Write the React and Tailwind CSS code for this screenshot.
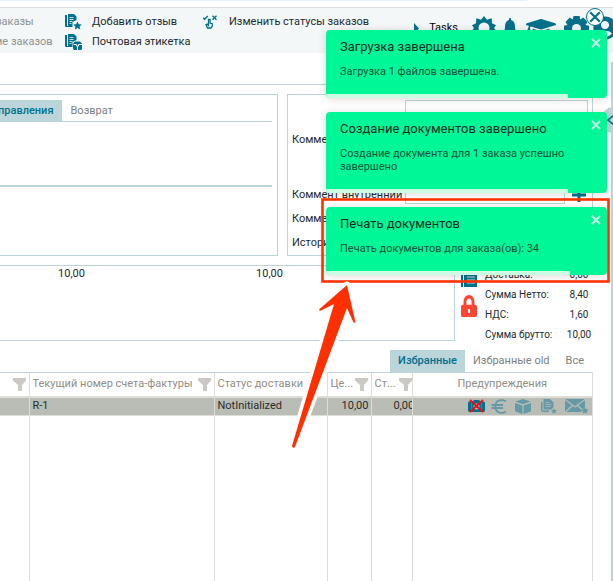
import { FaBell, FaGraduationCap, FaUserCircle, FaLock } from "react-icons/fa";

const toasts = [
  {
    title: "Загрузка завершена",
    text: "Загрузка 1 файлов завершена.",
    progress: 86,
  },
  {
    title: "Создание документов завершено",
    text: "Создание документа для 1 заказа успешно завершено",
    progress: 86,
  },
  {
    title: "Печать документов",
    text: "Печать документов для заказа(ов): 34",
    progress: 87,
  },
];

const totals = [
  { label: "Доставка:", value: "0,00" },
  { label: "Сумма Нетто:", value: "8,40" },
  { label: "НДС:", value: "1,60" },
  { label: "Сумма брутто:", value: "10,00" },
];

function DocIcon({ badge, className }) {
  return (
    <svg viewBox="0 0 17 16" className={className} fill="currentColor" aria-hidden="true">
      <path d="M0 1h2v11h2v1H1a1 1 0 0 1-1-1z" />
      <path d="M3 0h6l2.500 2.500V6L7.500 8v5H3z" />
      <path d="M4.500 3.500h4M4.500 5.500h4M4.500 7.500h3M4.500 9.500h2" stroke="#f4f7f7" strokeWidth="0.800" />
      {badge === "star" && (
        <path d="M12.500 7.500l1.300 2.700 3 .3-2.200 2 .7 3-2.800-1.500-2.700 1.500.6-3-2.200-2 3-.3z" />
      )}
      {badge === "box" && (
        <>
          <path d="M8 9.500l2-2h5l2 2V15l-1 1H9l-1-1z" />
          <path d="M8.500 10.500h3v1.500h2v-1.500H17M12.500 12v4" stroke="#f4f7f7" fill="none" />
        </>
      )}
    </svg>
  );
}

function TouchIcon() {
  return (
    <svg viewBox="0 0 14 14" className="h-3.5 w-3.5" fill="none" stroke="#00708c" strokeWidth="1.300" aria-hidden="true">
      <path d="M0 2.800l1.600 1.500L4.800 1M9.500.8l4 4M13.500.8l-4 4" />
      <path d="M5.500 8V4.500h1.600V8l2.200.7v2.400L8 13H4.500L3 9.800l1-.8 1.500 1.500z" />
    </svg>
  );
}

function SunIcon() {
  return (
    <svg viewBox="0 0 24 24" className="h-6 w-6" fill="#00708c" aria-hidden="true">
      <path d="M12 0l3 3.800 4.700-1.500.3 4.900 4 2-2 2.800 2 2.800-4 2-.3 4.900-4.700-1.500L12 24l-3-3.800-4.700 1.500-.3-4.900-4-2L2 12 0 9.200l4-2 .3-4.900L9 3.800z" />
      <circle cx="12" cy="12" r="5.500" fill="#f4f7f8" />
    </svg>
  );
}

function GearIcon() {
  return (
    <svg viewBox="0 0 25 25" className="h-[25px] w-[25px]" fill="#00708c" aria-hidden="true">
      <path d="M9.500 0h6l.8 3.500 3-2L23.500 6l-2 3 3.500.7v5.600l-3.500.7 2 3-4.200 4.500-3-2-.8 3.500h-6l-.8-3.500-3 2L1.500 19l2-3L0 15.300V9.700L3.500 9l-2-3 4.200-4.500 3 2z" />
      <circle cx="12.500" cy="12.500" r="4.500" fill="#f4f7f8" />
    </svg>
  );
}

function FilterIcon() {
  return (
    <svg viewBox="0 0 13 13" className="h-[13px] w-[13px] shrink-0" fill="#ccc8c3" aria-hidden="true">
      <path d="M0 0h13v2.500L9 7v6H5V7L0 2.500z" />
    </svg>
  );
}

function CloseIcon({ className }) {
  return (
    <svg viewBox="0 0 10 10" className={className} fill="none" stroke="currentColor" strokeWidth="1.800" aria-hidden="true">
      <path d="M1 1l8 8M9 1L1 9" />
    </svg>
  );
}

function Warnings() {
  return (
    <div className="flex h-[17px] items-center justify-end text-[#6599a5]">
      <svg viewBox="0 0 17 14" className="mr-1.5 h-3.5 w-[17px]" aria-label="Фото">
        <path d="M1 2.500h3.500L6 1h5l1.500 1.500H16l1 1V12l-1 1H1l-1-1V3.500z" fill="#00708c" />
        <path d="M3.500 3v9.500M13.500 3v9.500" stroke="#4c93a3" strokeWidth="0.700" />
        <circle cx="8.500" cy="7.500" r="3" fill="#b9bdb6" />
        <circle cx="8.500" cy="7.500" r="1.300" fill="#00708c" />
        <path d="M2 1l13 12M15 1L2 13" stroke="#f00d12" strokeWidth="1.800" />
      </svg>
      <svg viewBox="0 0 16 15" className="mr-2 h-[15px] w-4" fill="none" stroke="currentColor" strokeWidth="1.800" aria-label="Оплата">
        <path d="M15 2.200C9 -.5 4.300 2 4.300 7.500S9 15.500 15 12.800M.5 6h11.500M.5 9h11.500" />
      </svg>
      <svg viewBox="0 0 16 15" className="mr-2.5 h-[15px] w-4" fill="currentColor" aria-label="Посылка">
        <path d="M8 0l7.500 2.500L8 5.200.5 2.500zM0 4l7.400 2.600V15L0 12.200zM16 4L8.600 6.600V15l7.400-2.800z" />
      </svg>
      <svg viewBox="0 0 16 15" className="mr-2 h-[15px] w-4" fill="currentColor" aria-label="Документы">
        <path d="M0 3h1.500v8.500H8V13H1.500L0 11.500z" />
        <path d="M2.500 0H9l3.500 3.500V8l-2 2.500h-8z" />
        <path d="M4.500 3.500h4M4.500 5.500h6M4.500 7.500h5" stroke="#b9bdb6" strokeWidth="0.800" />
        <path d="M13 9l.8 1.900 2.200.2-1.600 1.400.5 2.200-1.900-1.200-1.900 1.200.5-2.200-1.600-1.400 2.200-.2z" />
      </svg>
      <svg viewBox="0 0 24 15" className="h-[15px] w-6" fill="currentColor" aria-label="Письмо">
        <path d="M0 0h20v8l-4 5H0z" />
        <path d="M0 .5l10 7.500L20 .5M.5 13l7-6.500M12.500 6.500l5 4.500" stroke="#b9bdb6" strokeWidth="1.200" fill="none" />
        <path d="M20 8l1.100 2.200 2.600.3-1.900 1.800.5 2.500-2.300-1.200-2.300 1.200.5-2.500-1.900-1.800 2.600-.3z" />
      </svg>
    </div>
  );
}

function Toolbar() {
  return (
    <header className="mt-[7px] flex h-[46px] items-start border-t border-[#dcdfde] bg-[#f4f7f8] pt-1 whitespace-nowrap">
      <div className="-ml-1 w-[69px] shrink-0 text-[#8d9192]">
        <button className="block h-5">заказы</button>
        <button className="block h-5">ие заказов</button>
      </div>
      <div className="w-[138px] shrink-0">
        <button className="flex h-5 items-center gap-2.5">
          <DocIcon badge="star" className="h-4 w-[17px] text-[#00708c]" />
          Добавить отзыв
        </button>
        <button className="flex h-5 items-center gap-2.5">
          <DocIcon badge="box" className="h-4 w-[17px] text-[#00708c]" />
          Почтовая этикетка
        </button>
      </div>
      <button className="flex h-5 shrink-0 items-center gap-3">
        <TouchIcon />
        Изменить статусы заказов
      </button>
      <div className="-mr-1 ml-auto flex h-8 shrink-0 items-center text-[#00708c]">
        <svg viewBox="0 0 5 11" className="mr-2.5 h-[11px] w-[5px]" fill="currentColor" aria-hidden="true">
          <path d="M0 0l5 5.500L0 11z" />
        </svg>
        <button className="mr-3.5 text-black">Tasks</button>
        <button aria-label="Тема" className="mr-[7px]">
          <SunIcon />
        </button>
        <button aria-label="Уведомления" className="mr-[9px]">
          <FaBell className="h-5 w-3.5" preserveAspectRatio="none" />
        </button>
        <button aria-label="Обучение" className="mr-2">
          <FaGraduationCap className="h-[30px] w-[30px]" />
        </button>
        <button aria-label="Настройки" className="mr-1">
          <GearIcon />
        </button>
        <button aria-label="Профиль">
          <FaUserCircle className="h-6 w-6" />
        </button>
      </div>
    </header>
  );
}

function Comments() {
  return (
    <div className="ml-auto flex w-[306px] shrink-0 flex-col gap-1.5 border border-[#bcd5da] px-1 pt-[5px] pb-[3px]">
      <div className="flex h-20 items-center">
        <label htmlFor="comment" className="w-[113px] shrink-0">Комментарий</label>
        <textarea id="comment" className="h-full min-w-0 flex-1 resize-none border border-[#bcd5da]" />
      </div>
      <div className="flex h-[18px] items-center">
        <label htmlFor="inner" className="w-[113px] shrink-0 whitespace-nowrap">Коммент внутренний</label>
        <input id="inner" className="h-full w-40 border border-[#bcd5da]" />
        <button aria-label="Добавить" className="ml-[7px] text-[#00708c]">
          <svg viewBox="0 0 14 14" className="h-3.5 w-3.5" fill="currentColor">
            <path d="M5.500 0h3v5.500H14v3H8.500V14h-3V8.500H0v-3h5.500z" />
          </svg>
        </button>
      </div>
      <div className="flex h-[18px] items-center">Комментарии</div>
      <div className="flex h-[18px] items-center">История</div>
    </div>
  );
}

function OrdersTable() {
  const th = "h-6 border-r border-[#deded8] px-[3px] font-normal";
  const td = "h-[19px] border-t-2 border-r border-b border-[#deded8] px-[3px] py-0";
  const gap = "border-r border-[#deded8]";
  return (
    <table className="w-full table-fixed border-collapse border-t border-[#bcd5da] text-left">
      <colgroup>
        <col className="w-[29px]" />
        <col className="w-[185px]" />
        <col className="w-[113px]" />
        <col className="w-11" />
        <col className="w-[41px]" />
        <col />
      </colgroup>
      <thead className="text-[#918e86]">
        <tr>
          <th className={th}>
            <div className="flex justify-end"><FilterIcon /></div>
          </th>
          <th className={th}>
            <div className="flex items-center justify-between whitespace-nowrap">Текущий номер счета-фактуры <FilterIcon /></div>
          </th>
          <th className={th}>Статус доставки</th>
          <th className={th}>
            <div className="flex items-center justify-between">Це... <FilterIcon /></div>
          </th>
          <th className="h-6 overflow-hidden border-r border-[#deded8] pl-[3px] font-normal">
            <div className="flex items-center justify-between">Ст... <FilterIcon /></div>
          </th>
          <th className={th}>
            <div className="text-center">Предупреждения</div>
          </th>
        </tr>
      </thead>
      <tbody>
        <tr className="bg-[#b9bdb6] text-[#2c2c2a]">
          <td className={td} />
          <td className={td}>R-1</td>
          <td className={td}>NotInitialized</td>
          <td className="border-t-2 border-r border-b border-[#deded8] pr-0.5 text-right">10,00</td>
          <td className="overflow-hidden border-t-2 border-r border-b border-[#deded8] pl-[22px]">0,00</td>
          <td className={td}><Warnings /></td>
        </tr>
        <tr className="h-[166px]">
          <td className={gap} />
          <td className={gap} />
          <td className={gap} />
          <td className={gap} />
          <td className={gap} />
          <td className={gap} />
        </tr>
      </tbody>
    </table>
  );
}

function Toast({ title, text, progress }) {
  return (
    <div role="status" className="relative overflow-hidden rounded bg-[#00f797] px-3.5 pt-[7px] pb-5 shadow-[0_1px_8px_rgba(70,50,30,0.18)]">
      <h2 className="text-[13px] leading-5 text-[#06301f]">{title}</h2>
      <p className="mt-2 pr-4 leading-[13px] text-[#08583a]">{text}</p>
      <button aria-label="Закрыть" className="absolute top-2 right-1.5 text-[#c9fde6]">
        <CloseIcon className="h-2.5 w-2.5" />
      </button>
      <div className="absolute bottom-0 left-0 h-1 bg-[#cafde4]" style={{ width: `${progress}%` }} />
    </div>
  );
}

export default function App() {
  return (
    <div className="relative flex min-h-screen flex-col overflow-hidden bg-white font-['Roboto',sans-serif] text-[11px] leading-4 text-[#1c2b30]">
      <div className="absolute top-0 left-0 h-px w-[86%] bg-[#e6f0fa]" />
      <Toolbar />

      <div className="flex flex-1">
        <main className="mr-[18px] min-w-0 flex-1 pt-[31px]">
          <section className="flex border-t border-[#bcd5da] pt-[9px]">
            <div className="mr-[9px] h-[162px] flex-1 border-y border-r border-[#bcd5da] pt-[5px] pr-[5px]">
              <div className="flex border-b border-[#bcd5da]">
                <button className="-ml-0.5 h-[21px] bg-[#bcd5da] pr-2 font-medium text-[#00708c]">правления</button>
                <button className="h-[21px] px-[9px] text-[#7c8180]">Возврат</button>
              </div>
              <div className="h-[65px] border-b-2 border-[#bcd5da]" />
            </div>
            <Comments />
          </section>

          <section className="mt-[9px] flex h-[76px]">
            <div className="flex flex-1 border-y border-r border-[#bcd5da]">
              <span className="w-[85px] text-right">10,00</span>
              <span className="w-[198px] text-right">10,00</span>
            </div>
            <div className="ml-1.5 flex w-[132px]">
              <div className="flex w-6 flex-col gap-2 pt-1.5">
                <svg viewBox="0 0 16 16" className="h-4 w-4" fill="#00708c" aria-hidden="true">
                  <path d="M0 2h2v14H0zM3 0h13v16H3z" />
                  <path d="M6 6h8M6 9h8M6 12h8" stroke="#c7dde2" />
                </svg>
                <div className="relative text-[#ff4632]">
                  <FaLock className="h-[22px] w-4" preserveAspectRatio="none" />
                  <span className="absolute top-3.5 left-[7px] h-1 w-0.5 bg-white" />
                </div>
              </div>
              <dl className="flex-1 text-[10px]">
                {totals.map((row) => (
                  <div key={row.label} className="flex h-5 items-center justify-between">
                    <dt>{row.label}</dt>
                    <dd className="w-7 text-center whitespace-nowrap">{row.value}</dd>
                  </div>
                ))}
              </dl>
            </div>
          </section>

          <nav className="mt-[9px] flex h-[22px] justify-end text-[#7c8180]">
            <button className="bg-[#bcd5da] px-2 font-medium text-[#00708c]">Избранные</button>
            <button className="px-2">Избранные old</button>
            <button className="pr-[9px] pl-2">Все</button>
          </nav>
          <OrdersTable />
        </main>
        <aside className="mt-[9px] w-0.5 bg-[#bcd5da]" />
      </div>

      {/* Side panel handle */}
      <button aria-label="Развернуть панель" className="absolute top-[107px] -right-3.5 flex h-[26px] w-[26px] items-center rounded-full bg-[#bcd5da] pl-1.5 text-[#00708c]">
        <svg viewBox="0 0 8 12" className="h-3 w-2" fill="none" stroke="currentColor" strokeWidth="1.500">
          <path d="M7 1L1 6l6 5" />
        </svg>
      </button>

      <div className="absolute top-[30px] right-1.5 flex w-[281px] flex-col gap-3.5">
        {toasts.map((toast) => (
          <Toast key={toast.title} {...toast} />
        ))}
      </div>

      <button aria-label="Закрыть все" className="absolute top-2 right-[9px] flex h-[18px] w-[18px] items-center justify-center rounded-full border border-[#00708c] bg-white text-[#00708c]">
        <CloseIcon className="h-3 w-3" />
      </button>

      {/* Highlight frame and arrow */}
      <svg viewBox="0 0 613 581" className="pointer-events-none absolute top-0 right-0 h-[581px] w-[613px]" aria-hidden="true">
        <rect x="322.500" y="199.500" width="286" height="82" fill="none" stroke="#ff3300" strokeWidth="2.600" />
        <path
          d="M347 285L319 309.500L320 311L334 304L292 446Q292.500 449 295 447L347 308L353.500 322.500H355.500Z"
          fill="#ff3000"
          stroke="#fff"
          strokeWidth="7"
          strokeLinejoin="round"
          paintOrder="stroke"
        />
      </svg>
    </div>
  );
}
